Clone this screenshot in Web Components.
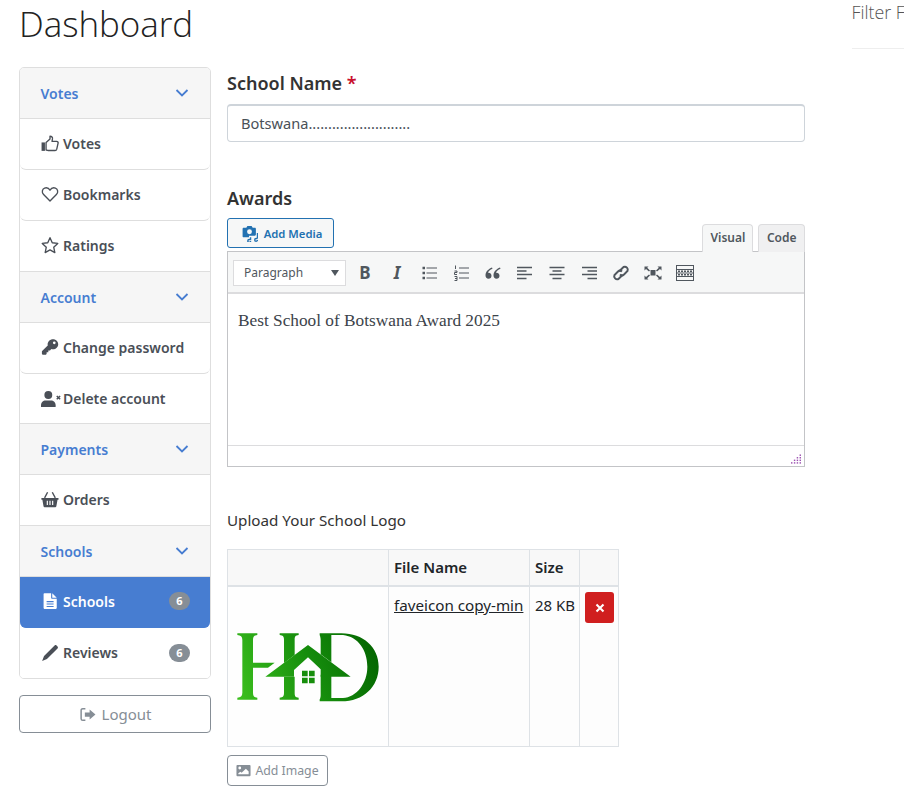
<!DOCTYPE html>
<html lang="en">
<head>
<meta charset="utf-8">
<title>Dashboard</title>
<style>
    html, body { margin: 0; padding: 0; background: #fff; overflow: hidden; height: 793px; }
    body { font-family: 'Noto Sans', sans-serif; color: #333; }
</style>
</head>
<body>
<dash-page>
    <span slot="title">Dashboard</span>
    <side-menu slot="sidebar">
        <menu-head label="Votes"></menu-head>
        <menu-item icon="thumb" label="Votes" rounded></menu-item>
        <menu-item icon="heart" label="Bookmarks" rounded></menu-item>
        <menu-item icon="star" label="Ratings"></menu-item>
        <menu-head label="Account"></menu-head>
        <menu-item icon="key" label="Change password" rounded></menu-item>
        <menu-item icon="userx" label="Delete account" short></menu-item>
        <menu-head label="Payments"></menu-head>
        <menu-item icon="basket" label="Orders"></menu-item>
        <menu-head label="Schools"></menu-head>
        <menu-item icon="file" label="Schools" badge="6" active rounded></menu-item>
        <menu-item icon="pencil" label="Reviews" badge="6" last></menu-item>
    </side-menu>
    <outline-button slot="sidebar" icon="signout" wide>Logout</outline-button>
    <school-form slot="main"></school-form>
    <span slot="aside">Filter F</span>
</dash-page>

<script>
const ICONS = {
    thumb: '<rect x=".5" y="7.500" width="3" height="7.500" fill="currentColor"/><path d="M4.500 7.600 8 4.400V2c1.600 0 2.400 1 2.200 2.400L9.800 6.600h4.100c1 0 1.500.8 1.300 1.600l-1.200 5.300c-.2.800-.8 1.200-1.500 1.200H7c-.9 0-1.400-.5-2.500-.5Z" fill="none" stroke="currentColor" stroke-width="1.200" stroke-linejoin="round"/>',
    heart: '<path d="M8 14.300 2.300 8.500C.4 6.500 1 3.500 3.200 2.700 5 2.100 7 2.900 8 4.600c1-1.700 3-2.500 4.800-1.900 2.200.8 2.800 3.800.9 5.800Z" fill="none" stroke="currentColor" stroke-width="1.200" stroke-linejoin="round"/>',
    star: '<path d="M8 1.500 10 6l4.900.6-3.600 3.300 1 4.800L8 12.300l-4.300 2.400 1-4.800L1.100 6.600 6 6Z" fill="none" stroke="currentColor" stroke-width="1.200" stroke-linejoin="round"/>',
    key: '<path fill-rule="evenodd" d="M10.700 1C13.200 1 15.300 3 15.300 5.500S13.200 10 10.700 10c-.5 0-1-.1-1.500-.2L8 11.100H6.500v1.500H5V14.100c0 .4-.3.7-.7.7H1.500c-.4 0-.7-.3-.7-.7v-2c0-.2.1-.4.2-.5l5-5c-.1-.3-.1-.6-.1-1C5.900 3 8.100 1 10.700 1ZM11.800 3.100a1.200 1.200 0 1 0 0 2.400 1.200 1.200 0 0 0 0-2.400Z" fill="currentColor"/>',
    userx: '<circle cx="6.500" cy="4.400" r="3.500" fill="currentColor"/><path d="M0 15v-1.500C0 11 2 9.300 4 9.300h5c2 0 4 1.700 4 4.200V15Z" fill="currentColor"/><path d="m14 5.300 3 3m0-3-3 3" stroke="currentColor" stroke-width="1.300" fill="none"/>',
    basket: '<g transform="translate(-.6 0) scale(.95 1)"><path fill-rule="evenodd" d="M1 7h16v1.600h-.9L15 14.500c-.1.500-.5.800-1 .8H4c-.5 0-.9-.3-1-.8L1.900 8.600H1ZM6 9.500v3.800h1.100V9.500Zm2.500 0v3.800h1.100V9.500Zm2.500 0v3.800h1.100V9.500Z" fill="currentColor"/><path d="M4 7 6.800 2M14 7 11.200 2" stroke="currentColor" stroke-width="1.300" fill="none"/></g>',
    file: '<path fill-rule="evenodd" d="M3 1h6v4.300c0 .4.300.7.700.7H14v8.300c0 .4-.3.700-.7.700H3c-.4 0-.7-.3-.7-.7V1.700C2.300 1.300 2.600 1 3 1ZM5 8v1h6.200V8Zm0 2.200v1h6.200v-1Zm0 2.200v1h6.200v-1Z" fill="currentColor"/><path d="M10 1.100 14 5h-4Z" fill="currentColor"/>',
    pencil: '<path d="M11.200 2.200 13.800 4.800 5.300 13.300 1 15l1.700-4.300ZM12.100 1.300c.5-.5 1.200-.5 1.700 0l.9.900c.5.500.5 1.200 0 1.700l-.9.900-2.600-2.600Z" fill="currentColor"/>',
    signout: '<path d="M6 2.500H3.500C2.700 2.500 2 3.200 2 4v8c0 .8.700 1.500 1.500 1.500H6" fill="none" stroke="currentColor" stroke-width="1.400"/><path d="M10 3.300 15.500 8 10 12.700V10H5.500V6H10Z" fill="currentColor"/>',
    image: '<path fill-rule="evenodd" d="M1.500 2h13c.6 0 1 .4 1 1v10c0 .6-.4 1-1 1h-13c-.6 0-1-.4-1-1V3c0-.6.4-1 1-1Zm2.500 1.800a1.500 1.500 0 1 0 0 3 1.500 1.500 0 0 0 0-3ZM2.500 12h11V9L10.500 6 6 10.500 4.700 9.200 2.500 11Z" fill="currentColor"/>',
    times: '<path d="m4 4 8 8m0-8-8 8" stroke="currentColor" stroke-width="2.400" fill="none"/>',
    chevron: '<path d="m2.500 5 5.500 5.500L13.500 5" stroke="currentColor" stroke-width="1.800" fill="none"/>',
    media: '<path fill-rule="evenodd" d="M2.500 2.500H5L6 1h4l1 1.500h2c.6 0 1 .4 1 1V9c0 .6-.4 1-1 1H7.500v1.500h-5c-.6 0-1-.4-1-1v-7c0-.6.4-1 1-1ZM8 4a2.300 2.300 0 1 0 0 4.600A2.300 2.300 0 0 0 8 4Z" fill="currentColor"/><path d="M9 15a1.300 1.300 0 1 1-1.300-1.300H9V11.500M15.500 12.800V7.500M15.500 14a1.300 1.300 0 1 1-1.300-1.300h1.300" stroke="currentColor" stroke-width="1.300" fill="none"/>'
};

function svgIcon(name, size) {
    return `<svg width="${size}" height="${size}" viewBox="0 0 16 16" aria-hidden="true">${ICONS[name]}</svg>`;
}

class DashPage extends HTMLElement {
    connectedCallback() {
        this.attachShadow({ mode: 'open' });
        this.shadowRoot.innerHTML = `
            <style>
                :host { display: block; width: 904px; height: 793px; overflow: hidden; }
                .wrap { display: flex; padding-left: 19px; width: 1200px; }
                .left { flex: none; width: 786px; }
                h1 { margin: 0; height: 67px; font: 300 35px/47px 'Open Sans', sans-serif; color: #222; letter-spacing: -0.05px; }
                .cols { display: flex; gap: 16px; }
                .side { width: 192px; flex: none; display: flex; flex-direction: column; gap: 16px; }
                .main { width: 578px; flex: none; }
                .aside { margin-left: 46.500px; width: 300px; height: 49px; border-bottom: 1px solid #eee; box-sizing: border-box;
                    font: 300 17.800px/25px 'Open Sans', sans-serif; color: #555; white-space: nowrap; }
            </style>
            <div class="wrap">
                <div class="left">
                    <h1><slot name="title"></slot></h1>
                    <div class="cols">
                        <div class="side"><slot name="sidebar"></slot></div>
                        <div class="main"><slot name="main"></slot></div>
                    </div>
                </div>
                <div class="aside"><slot name="aside"></slot></div>
            </div>
        `;
    }
}

class SideMenu extends HTMLElement {
    connectedCallback() {
        this.attachShadow({ mode: 'open' });
        this.shadowRoot.innerHTML = `
            <style>
                :host { display: block; border: 1px solid #dedede; border-radius: 5px; overflow: hidden; background: #fff; }
            </style>
            <slot></slot>
        `;
    }
}

class MenuHead extends HTMLElement {
    connectedCallback() {
        this.attachShadow({ mode: 'open' });
        this.shadowRoot.innerHTML = `
            <style>
                :host { display: flex; align-items: center; justify-content: space-between; height: 51px; box-sizing: border-box;
                    padding: 0 20px 0 20.500px; background: #f6f6f6; border-bottom: 1px solid #dedede;
                    color: #477dd1; font: 600 14px 'Noto Sans', sans-serif; }
                svg { display: block; }
            </style>
            <span>${this.getAttribute('label')}</span>${svgIcon('chevron', 16)}
        `;
    }
}

class MenuItem extends HTMLElement {
    connectedCallback() {
        const badge = this.getAttribute('badge');
        this.attachShadow({ mode: 'open' });
        this.shadowRoot.innerHTML = `
            <style>
                :host { display: flex; align-items: center; height: 51px; box-sizing: border-box; padding: 0 20px 2px 21px;
                    border-bottom: 1px solid #dedede; color: #4a4f57; font: 600 14px 'Noto Sans', sans-serif; background: #fff; }
                :host([rounded]) { border-radius: 0 0 6px 6px; }
                :host([active]) { background: #477dd1; color: #fff; border-bottom-color: #477dd1; }
                :host([short]) { height: 50px; padding-bottom: 0; }
                :host([last]) { border-bottom: 0; height: 50px; padding-bottom: 1px; }
                .ic { width: 22px; display: flex; justify-content: flex-start; flex: none; }
                svg { display: block; overflow: visible; }
                .label { flex: 1; }
                .badge { width: 21px; height: 18px; border-radius: 9px; background: #868e96; color: #fff;
                    font: 700 11px/18px 'Noto Sans', sans-serif; text-align: center; }
            </style>
            <span class="ic">${svgIcon(this.getAttribute('icon'), 18)}</span>
            <span class="label">${this.getAttribute('label')}</span>
            ${badge ? `<span class="badge">${badge}</span>` : ''}
        `;
    }
}

class OutlineButton extends HTMLElement {
    connectedCallback() {
        this.attachShadow({ mode: 'open' });
        this.shadowRoot.innerHTML = `
            <style>
                :host { display: inline-flex; align-items: center; justify-content: center; gap: 4px; box-sizing: border-box;
                    height: 31px; width: 101px; border: 1px solid #868e96; border-radius: 4px; color: #868e96;
                    font: 400 12.300px 'Noto Sans', sans-serif; }
                :host([wide]) { display: flex; width: 192px; height: 38px; font-size: 15px; gap: 6px; }
                svg { display: block; }
            </style>
            ${svgIcon(this.getAttribute('icon'), this.hasAttribute('wide') ? 17 : 15)}<slot></slot>
        `;
    }
}

class RichEditor extends HTMLElement {
    connectedCallback() {
        const dots = [];
        for (let row = 0; row < 4; row++) {
            for (let col = 3 - row; col < 4; col++) {
                dots.push(`<rect x="${col * 3}" y="${row * 2.700}" width="1.500" height="1.500"/>`);
            }
        }
        this.attachShadow({ mode: 'open' });
        this.shadowRoot.innerHTML = `
            <style>
                :host { display: block; font-family: 'Noto Sans', sans-serif; }
                .top { display: flex; justify-content: space-between; align-items: flex-end; height: 33px; }
                .media { display: flex; align-items: center; justify-content: center; gap: 6px; width: 107px; height: 30px; box-sizing: border-box;
                    margin-bottom: 3px; padding-left: 2px; border: 1px solid #2271b1; border-radius: 3px; background: #f6f7f7; color: #2271b1;
                    font-size: 11.300px; font-weight: 600; }
                .tabs { display: flex; gap: 5px; margin-bottom: -1px; position: relative; }
                .tab { height: 28px; box-sizing: border-box; padding: 0 7px; border: 1px solid #dcdcde; border-bottom: 0; border-radius: 4px 4px 0 0;
                    background: #f6f7f7; color: #50575e; font: 600 12px/26px 'Noto Sans', sans-serif; }
                .tab.code { background: #f0f0f1; padding: 0 7.500px; }
                .box { border: 1px solid #c3c4c7; }
                .bar { display: flex; align-items: center; height: 42px; box-sizing: border-box; padding: 1px 5px 0; background: #f6f7f7;
                    border-bottom: 2px solid #dcdcde; color: #50575e; }
                .format { display: flex; justify-content: space-between; align-items: center; width: 113px; height: 26px; box-sizing: border-box;
                    padding: 0 6px 0 10px; background: #fff; border: 1px solid #dcdcde; font-size: 12px; margin-right: 3px; }
                .caret { width: 0; height: 0; border: 4px solid transparent; border-top: 6px solid #50575e; border-bottom: 0; }
                .btn { width: 32px; height: 28px; display: flex; align-items: center; justify-content: center; flex: none; font-size: 17px; }
                .btn svg { display: block; }
                .b { font-weight: 700; }
                .i { font-weight: 700; font-style: italic; }
                .body { height: 151px; box-sizing: border-box; padding: 16px 10px; font: 17.300px/22px 'Liberation Serif', serif; color: #3c434a; }
                .status { height: 21px; box-sizing: border-box; border-top: 1px solid #dcdcde; display: flex; justify-content: flex-end; align-items: flex-end; padding: 0 3px 2px 0; }
                .status svg { display: block; fill: #9b4fb0; }
            </style>
            <div class="top">
                <div class="media">${svgIcon('media', 17)}<span>Add Media</span></div>
                <div class="tabs"><div class="tab">Visual</div><div class="tab code">Code</div></div>
            </div>
            <div class="box">
                <div class="bar">
                    <div class="format"><span>Paragraph</span><span class="caret"></span></div>
                    <div class="btn b">B</div>
                    <div class="btn i">I</div>
                    <div class="btn"><svg width="15" height="20" viewBox="0 0 15 20" fill="none" stroke="currentColor" stroke-width="1.200"><path d="M4.500 5h10.500M4.500 10h10.500M4.500 15h10.500"/><path d="M.5 5h2.500M.5 10h2.500M.5 15h2.500" stroke-width="2.600"/></svg></div>
                    <div class="btn"><svg width="15" height="20" viewBox="0 0 15 20" fill="none" stroke="currentColor" stroke-width="1"><path d="M5 5h10M5 10h10M5 15h10"/><path d="M1.500 2.500v3.500M.5 8h2.500v1.500H.5V11.500h2.500M.5 13.500h2.500v4H.5M1 15.500h2"/></svg></div>
                    <div class="btn"><svg width="16" height="14" viewBox="0 0 16 14" fill="currentColor"><path d="M7 1.500C3.500 3 .5 5.500.5 9.500c0 2 1.200 3.200 3 3.200s3-1.300 3-3-1.300-3-3-3c-.2 0-.4 0-.5.100C3.500 5 5 3.500 7.500 2.700ZM15 1.500c-3.500 1.500-6.500 4-6.500 8 0 2 1.200 3.200 3 3.200s3-1.300 3-3-1.300-3-3-3c-.2 0-.4 0-.5.100.5-1.800 2-3.300 4.500-4.100Z"/></svg></div>
                    <div class="btn"><svg width="16" height="14" viewBox="0 0 16 14" fill="none" stroke="currentColor" stroke-width="1.700"><path d="M0 1.500h15M0 5h9.500M0 8.500h15M0 12.500h9.500"/></svg></div>
                    <div class="btn"><svg width="16" height="14" viewBox="0 0 16 14" fill="none" stroke="currentColor" stroke-width="1.700"><path d="M.5 1.500h15M3.500 5h9M.5 8.500h15M3.500 12.500h9"/></svg></div>
                    <div class="btn"><svg width="16" height="14" viewBox="0 0 16 14" fill="none" stroke="currentColor" stroke-width="1.700"><path d="M1 1.500h15M6.500 5H16M1 8.500h15M6.500 12.500H16"/></svg></div>
                    <div class="btn"><svg width="18" height="18" viewBox="0 0 18 18" fill="none" stroke="currentColor" stroke-width="2"><path d="M7.500 7 11.500 3a3 3 0 0 1 4 4l-3.500 3.500a3 3 0 0 1-4 0"/><path d="M10.500 11 6.500 15a3 3 0 0 1-4-4L6 7.500a3 3 0 0 1 4 0"/></svg></div>
                    <div class="btn"><svg width="18" height="14" viewBox="0 0 18 14" fill="currentColor"><rect x="6.500" y="4" width="5" height="5.500"/><path d="M.5.500h4L3.200 1.800 6 4.500l-1 1L2 3 .5 4.500ZM17.500.500h-4l1.300 1.300L12 4.500l1 1L16 3l1.500 1.500ZM.5 13.500h4L3.200 12.200 6 9.500l-1-1L2 11 .5 9.500ZM17.500 13.500h-4l1.300-1.300L12 9.500l1-1L16 11l1.500-1.500Z"/></svg></div>
                    <div class="btn"><svg width="18" height="16" viewBox="0 0 18 16" fill="none" stroke="currentColor"><rect x=".5" y=".5" width="17" height="15"/><path d="M.5 4.500h17M.5 8h17M.5 11.500h17" /><path d="M2 6.200h14M2 9.800h14" stroke-width="1.500" stroke-dasharray="2 1"/></svg></div>
                </div>
                <div class="body"><slot></slot>Best School of Botswana Award 2025</div>
                <div class="status"><svg width="10" height="10" viewBox="0 0 10.500 9.500">${dots.join('')}</svg></div>
            </div>
        `;
    }
}

class UploadTable extends HTMLElement {
    connectedCallback() {
        this.attachShadow({ mode: 'open' });
        this.shadowRoot.innerHTML = `
            <style>
                :host { display: block; width: 392px; font: 400 15px 'Noto Sans', sans-serif; color: #212529; }
                .grid { display: grid; grid-template-columns: 161px 141px 50px 39px; grid-template-rows: 37px 160px;
                    border: 1px solid #dee2e6; border-width: 1px 0 0 1px; box-sizing: border-box; width: 392px; }
                .c { border: 1px solid #dee2e6; border-width: 0 1px 1px 0; padding: 5px; box-sizing: border-box; white-space: nowrap; background: #fdfdfd; overflow: hidden; }
                .h { background: #f8f8f8; font-weight: 600; border-bottom-width: 2px; line-height: 24px; }
                a { color: #212529; text-decoration: underline; line-height: 26px; font-size: 15.200px; }
                .size { line-height: 26px; }
                .logo { padding: 0; }
                .logo svg { display: block; }
                .del { width: 29px; height: 31px; border-radius: 3px; background: #d01f1f; color: #fff; display: flex; align-items: center; justify-content: center; }
                .del svg { display: block; }
            </style>
            <div class="grid">
                <div class="c h"></div><div class="c h">File Name</div><div class="c h">Size</div><div class="c h"></div>
                <div class="c logo">
                    <svg width="160" height="159" viewBox="0 -99 480 477" aria-label="HD logo">
                        <defs><linearGradient id="g" gradientUnits="userSpaceOnUse" x1="30" y1="240" x2="450" y2="70"><stop offset="0" stop-color="#3cc01e"/><stop offset="0.55" stop-color="#158c0c"/><stop offset="1" stop-color="#036400"/></linearGradient></defs>
                        <rect x="0" y="-99" width="480" height="477" fill="#fefefe"/>
                        <path fill="url(#g)" d="M28 40h60v5c-10 1-13 5-13 15v68h65l-20 15H75v75c0 10 3 14 13 15v6H28v-6c10-1 15-5 15-15V60c0-10-5-14-15-15Z"/>
                        <path fill="url(#g)" d="M155 40h57v5c-10 1-12 5-12 15v45l-32 24V60c0-10-3-14-13-15ZM168 170h32v48c0 10 2 14 12 15v6h-57v-6c10-1 13-5 13-15Z"/>
                        <path fill="url(#g)" d="M275 40h65c66 0 112 42 112 100 0 60-46 104-112 104h-65v-6c0 0 3-3 3-14v-60h32v70h35c40-3 73-43 73-94 0-50-28-90-73-95h-35v82l-32-24V60c0-8-3-14-3-15Z"/>
                        <path fill="url(#g)" d="M240 75 368 170H278V148L240 112 198 150V170H112Z"/>
                        <path fill="#178e0c" d="M222 152h17v17h-17ZM243 152h17v17h-17ZM222 173h17v17h-17ZM243 173h17v17h-17Z"/>
                    </svg>
                </div>
                <div class="c"><a>faveicon copy-min</a></div>
                <div class="c size">28 KB</div>
                <div class="c"><div class="del">${svgIcon('times', 14)}</div></div>
            </div>
        `;
    }
}

class SchoolForm extends HTMLElement {
    connectedCallback() {
        this.attachShadow({ mode: 'open' });
        this.shadowRoot.innerHTML = `
            <style>
                :host { display: block; font-family: 'Noto Sans', sans-serif; }
                label { display: block; font-size: 18px; font-weight: 600; line-height: 24px; color: #333; }
                .req { color: #c8102e; }
                .name { padding-top: 4px; height: 33px; }
                .input { height: 38px; box-sizing: border-box; border: 1px solid #ced4da; border-top-width: 2px; border-radius: 4px; padding: 0 13px; font-size: 14.600px; line-height: 35px; color: #495057; }
                .awards { margin-top: 44px; height: 32px; }
                .upload { margin: 43px 0 19px; font-size: 15.200px; line-height: 20px; color: #333; }
                outline-button { margin-top: 8px; }
            </style>
            <label class="name">School Name <span class="req">*</span></label>
            <div class="input">Botswana..........................</div>
            <label class="awards">Awards</label>
            <rich-editor></rich-editor>
            <div class="upload">Upload Your School Logo</div>
            <upload-table></upload-table>
            <outline-button icon="image">Add Image</outline-button>
        `;
    }
}

customElements.define('dash-page', DashPage);
customElements.define('side-menu', SideMenu);
customElements.define('menu-head', MenuHead);
customElements.define('menu-item', MenuItem);
customElements.define('outline-button', OutlineButton);
customElements.define('rich-editor', RichEditor);
customElements.define('upload-table', UploadTable);
customElements.define('school-form', SchoolForm);
</script>
</body>
</html>
